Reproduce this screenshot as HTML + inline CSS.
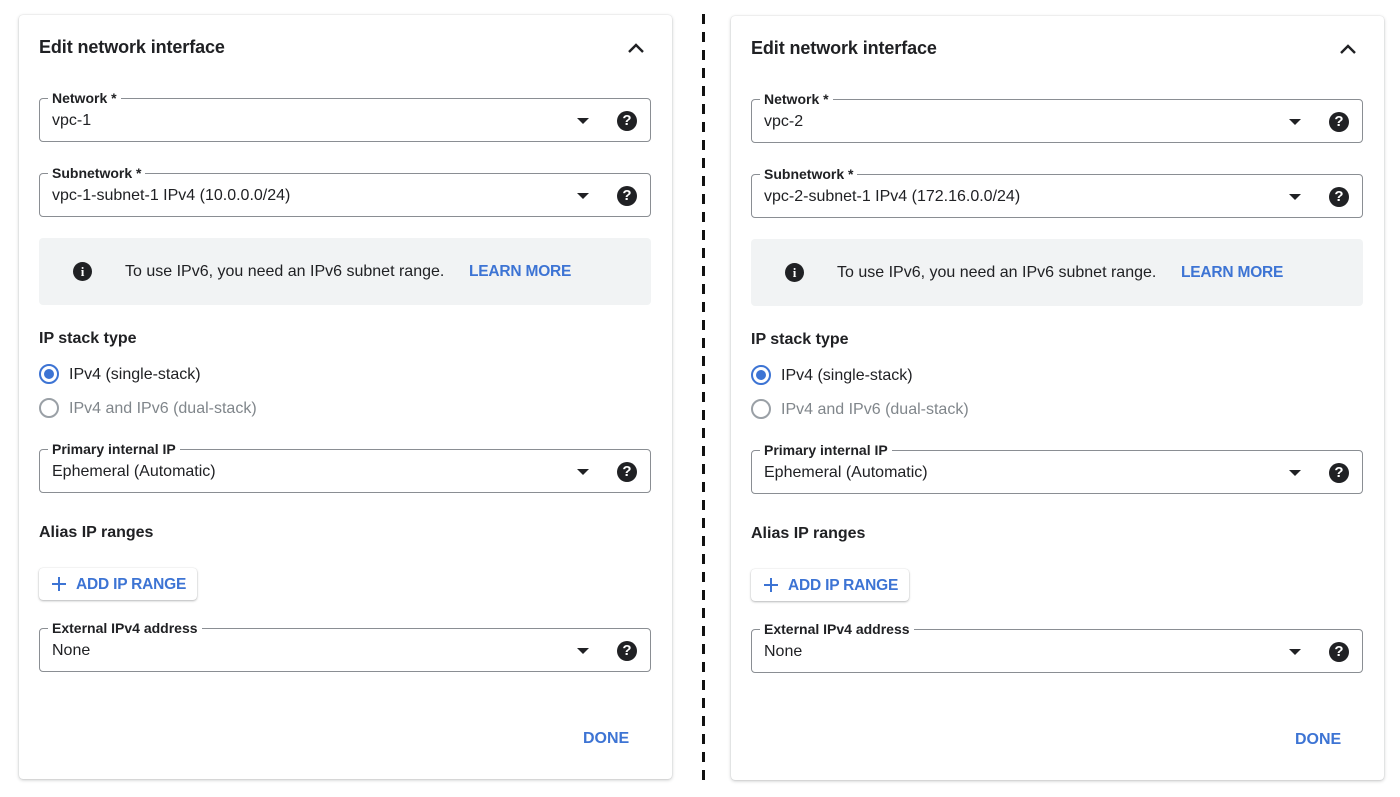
<!DOCTYPE html>
<html><head><meta charset="utf-8"><style>
*{box-sizing:border-box;margin:0;padding:0}
body{width:1400px;height:797px;background:#fff;font-family:"Liberation Sans",Arial,sans-serif;color:#202124;position:relative;overflow:hidden}
.card{position:absolute;width:653px;height:764px;background:#fff;border-radius:4px;box-shadow:0 1px 3px rgba(60,64,67,.3),0 0 1px rgba(60,64,67,.2)}
.a{position:absolute}
.title{left:20px;top:22px;font-size:18px;font-weight:bold;letter-spacing:-.1px}
.fld{position:absolute;left:20px;width:612px;height:44px;border:1px solid #8a8e93;border-radius:4px}
.fld .lbl{position:absolute;left:8px;top:-9px;background:#fff;padding:0 4px;font-size:14px;font-weight:bold;line-height:16px}
.fld .val{position:absolute;left:12px;top:13px;font-size:16px}
.fld .arr{position:absolute;left:537px;top:19px;width:0;height:0;border-left:6px solid transparent;border-right:6px solid transparent;border-top:6px solid #202124}
.fld .help{position:absolute;left:577px;top:12px;width:20px;height:20px;border-radius:50%;background:#202124;color:#fff;font-size:15px;font-weight:bold;text-align:center;line-height:20px}
.info{left:20px;top:223px;width:612px;height:67px;background:#f1f3f4;border-radius:4px}
.info .ic{position:absolute;left:34px;top:24px;width:19px;height:19px;border-radius:50%;background:#202124;color:#fff;font-size:13px;font-weight:bold;text-align:center;line-height:19px;font-family:"Liberation Serif",serif}
.info .t{position:absolute;left:86px;top:25px;font-size:16px}
.info .lm{position:absolute;left:430px;top:25px;font-size:15.5px;color:#3d74d4;font-weight:bold;letter-spacing:-.2px}
.h{font-size:16px;font-weight:bold}
.radio{width:20px;height:20px;border-radius:50%;border:2px solid #3d74d4}
.radio::after{content:"";position:absolute;left:3px;top:3px;width:10px;height:10px;border-radius:50%;background:#3d74d4}
.radio2{width:20px;height:20px;border-radius:50%;border:2px solid #9aa0a6}
.btn{left:20px;top:553px;width:158px;height:32px;border-radius:4px;box-shadow:0 1px 2px rgba(60,64,67,.35),0 0 1px rgba(60,64,67,.2);color:#3d74d4;font-size:15.5px;font-weight:bold;letter-spacing:-.2px}
.done{left:564px;top:715px;color:#3d74d4;font-size:16px;font-weight:bold}
.dash{position:absolute;left:702px;top:14px;width:3px;height:768px;background:repeating-linear-gradient(to bottom,#111 0 10px,transparent 10px 18px)}
</style></head><body>
<div class="dash"></div>

<div class="card" style="left:19px;top:15px">
<div class="a title">Edit network interface</div>
<svg class="a" style="left:607px;top:26px" width="20" height="14" viewBox="0 0 20 14"><path d="M3 11 L10 4 L17 11" stroke="#202124" stroke-width="2.4" fill="none"/></svg>
<div class="fld" style="top:83px"><span class="lbl">Network *</span><span class="val">vpc-1</span><span class="arr"></span><span class="help">?</span></div>
<div class="fld" style="top:158px"><span class="lbl">Subnetwork *</span><span class="val">vpc-1-subnet-1 IPv4 (10.0.0.0/24)</span><span class="arr"></span><span class="help">?</span></div>
<div class="a info"><span class="ic">i</span><span class="t">To use IPv6, you need an IPv6 subnet range.</span><span class="lm">LEARN MORE</span></div>
<div class="a h" style="left:20px;top:315px">IP stack type</div>
<div class="a radio" style="left:20px;top:349px"></div>
<div class="a" style="left:50px;top:351px;font-size:16px">IPv4 (single-stack)</div>
<div class="a radio2" style="left:20px;top:383px"></div>
<div class="a" style="left:50px;top:385px;font-size:16px;color:#80868b">IPv4 and IPv6 (dual-stack)</div>
<div class="fld" style="top:434px"><span class="lbl">Primary internal IP</span><span class="val">Ephemeral (Automatic)</span><span class="arr"></span><span class="help">?</span></div>
<div class="a h" style="left:20px;top:509px">Alias IP ranges</div>
<div class="a btn"><svg class="a" style="left:12px;top:8px" width="16" height="16" viewBox="0 0 16 16"><path d="M8 1v14M1 8h14" stroke="#3d74d4" stroke-width="2"/></svg><span class="a" style="left:37px;top:8px">ADD IP RANGE</span></div>
<div class="fld" style="top:613px"><span class="lbl">External IPv4 address</span><span class="val">None</span><span class="arr"></span><span class="help">?</span></div>
<div class="a done">DONE</div>
</div>

<div class="card" style="left:731px;top:16px">
<div class="a title">Edit network interface</div>
<svg class="a" style="left:607px;top:26px" width="20" height="14" viewBox="0 0 20 14"><path d="M3 11 L10 4 L17 11" stroke="#202124" stroke-width="2.4" fill="none"/></svg>
<div class="fld" style="top:83px"><span class="lbl">Network *</span><span class="val">vpc-2</span><span class="arr"></span><span class="help">?</span></div>
<div class="fld" style="top:158px"><span class="lbl">Subnetwork *</span><span class="val">vpc-2-subnet-1 IPv4 (172.16.0.0/24)</span><span class="arr"></span><span class="help">?</span></div>
<div class="a info"><span class="ic">i</span><span class="t">To use IPv6, you need an IPv6 subnet range.</span><span class="lm">LEARN MORE</span></div>
<div class="a h" style="left:20px;top:315px">IP stack type</div>
<div class="a radio" style="left:20px;top:349px"></div>
<div class="a" style="left:50px;top:351px;font-size:16px">IPv4 (single-stack)</div>
<div class="a radio2" style="left:20px;top:383px"></div>
<div class="a" style="left:50px;top:385px;font-size:16px;color:#80868b">IPv4 and IPv6 (dual-stack)</div>
<div class="fld" style="top:434px"><span class="lbl">Primary internal IP</span><span class="val">Ephemeral (Automatic)</span><span class="arr"></span><span class="help">?</span></div>
<div class="a h" style="left:20px;top:509px">Alias IP ranges</div>
<div class="a btn"><svg class="a" style="left:12px;top:8px" width="16" height="16" viewBox="0 0 16 16"><path d="M8 1v14M1 8h14" stroke="#3d74d4" stroke-width="2"/></svg><span class="a" style="left:37px;top:8px">ADD IP RANGE</span></div>
<div class="fld" style="top:613px"><span class="lbl">External IPv4 address</span><span class="val">None</span><span class="arr"></span><span class="help">?</span></div>
<div class="a done">DONE</div>
</div>
</body></html>
